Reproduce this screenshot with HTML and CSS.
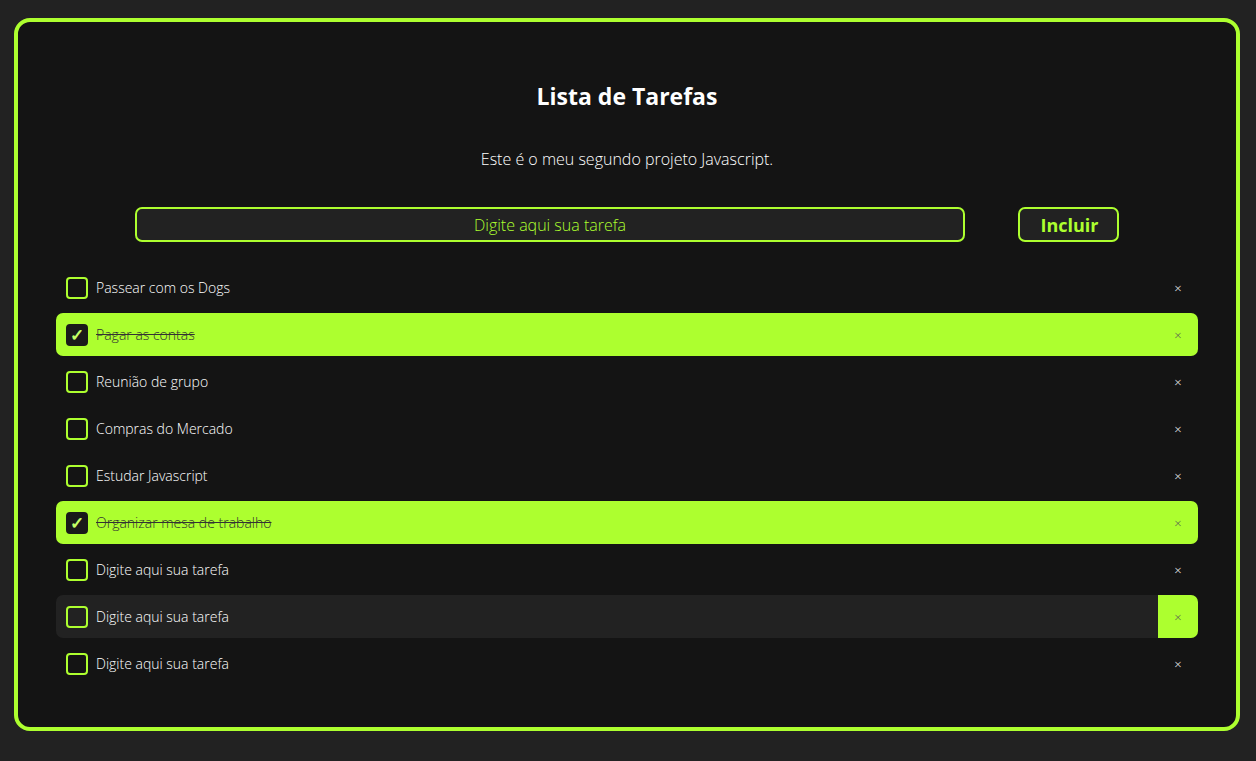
FILE: index.html
```html
<!DOCTYPE html>
<html lang="pt-BR">
<head>
<meta charset="utf-8">
<title>Lista de Tarefas</title>
<link rel="stylesheet" href="styles.css">
</head>
<body>
<main class="app">
  <h1 class="title">Lista de Tarefas</h1>
  <p class="subtitle">Este é o meu segundo projeto Javascript.</p>
  <div class="form">
    <input class="task-input" type="text" placeholder="Digite aqui sua tarefa">
    <button class="add-btn">Incluir</button>
  </div>
  <ul class="list">
    <li class="item"><span class="check"></span><span class="text">Passear com os Dogs</span><span class="del">×</span></li>
    <li class="item done"><span class="check">✓</span><span class="text">Pagar as contas</span><span class="del">×</span></li>
    <li class="item"><span class="check"></span><span class="text">Reunião de grupo</span><span class="del">×</span></li>
    <li class="item"><span class="check"></span><span class="text">Compras do Mercado</span><span class="del">×</span></li>
    <li class="item"><span class="check"></span><span class="text">Estudar Javascript</span><span class="del">×</span></li>
    <li class="item done"><span class="check">✓</span><span class="text">Organizar mesa de trabalho</span><span class="del">×</span></li>
    <li class="item"><span class="check"></span><span class="text">Digite aqui sua tarefa</span><span class="del">×</span></li>
    <li class="item hover"><span class="check"></span><span class="text">Digite aqui sua tarefa</span><span class="del">×</span></li>
    <li class="item"><span class="check"></span><span class="text">Digite aqui sua tarefa</span><span class="del">×</span></li>
  </ul>
</main>
</body>
</html>
```
FILE: styles.css
```css
* { box-sizing: border-box; }
html, body { margin: 0; height: 100%; }
body {
  background: #222222;
  font-family: "Open Sans", "Noto Sans", sans-serif;
  color: #ffffff;
  padding: 18px 16px 30px 14px;
}
.app {
  height: 713px;
  background: #141414;
  border: 4px solid #adff2f;
  border-radius: 16px;
  padding: 59px 38px 0 38px;
  display: flex;
  flex-direction: column;
}
.title {
  margin: 0;
  text-align: center;
  font-size: 23px;
  font-weight: 700;
  line-height: 30px;
}
.subtitle {
  margin: 37px 0 0 0;
  text-align: center;
  font-size: 16px;
  font-weight: 300;
  line-height: 22px;
}
.form {
  margin-top: 37px;
  display: flex;
  align-items: center;
  padding-left: 79px;
  padding-right: 79px;
}
.task-input {
  width: 830px;
  height: 35px;
  background: #222222;
  border: 2px solid #adff2f;
  border-radius: 7px;
  color: #adff2f;
  font-family: inherit;
  font-size: 16px;
  font-weight: 300;
  text-align: center;
  outline: none;
}
.task-input::placeholder { color: #adff2f; opacity: 1; }
.add-btn {
  margin-left: 53px;
  width: 101px;
  height: 35px;
  background: #222222;
  border: 2px solid #adff2f;
  border-radius: 7px;
  color: #adff2f;
  font-family: inherit;
  font-size: 18px;
  font-weight: 700;
  padding: 0 0 0 2px;
}
.list {
  list-style: none;
  margin: 24px 0 0 0;
  padding: 0;
  display: flex;
  flex-direction: column;
  gap: 4px;
}
.item {
  height: 43px;
  display: flex;
  align-items: center;
  border-radius: 7px;
  padding-left: 10px;
  font-size: 14px;
  font-weight: 300;
  overflow: hidden;
}
.check {
  width: 22px;
  height: 22px;
  border: 2px solid #adff2f;
  border-radius: 4px;
  display: flex;
  align-items: center;
  justify-content: center;
  font-size: 17px;
  font-weight: 700;
  color: #c4ff66;
  flex: none;
}
.text {
  margin-left: 8px;
  flex: 1;
}
.del {
  width: 40px;
  height: 100%;
  display: flex;
  align-items: center;
  justify-content: center;
  font-size: 13px;
  color: #ffffff;
  flex: none;
}
.item.done { background: #adff2f; }
.item.done .check { background: #1a1a1a; border-color: #1a1a1a; }
.item.done .text { color: #333333; text-decoration: line-through; }
.item.done .del { color: #555555; }
.item.hover { background: #222222; }
.item.hover .del { background: #adff2f; color: #555555; }
```
